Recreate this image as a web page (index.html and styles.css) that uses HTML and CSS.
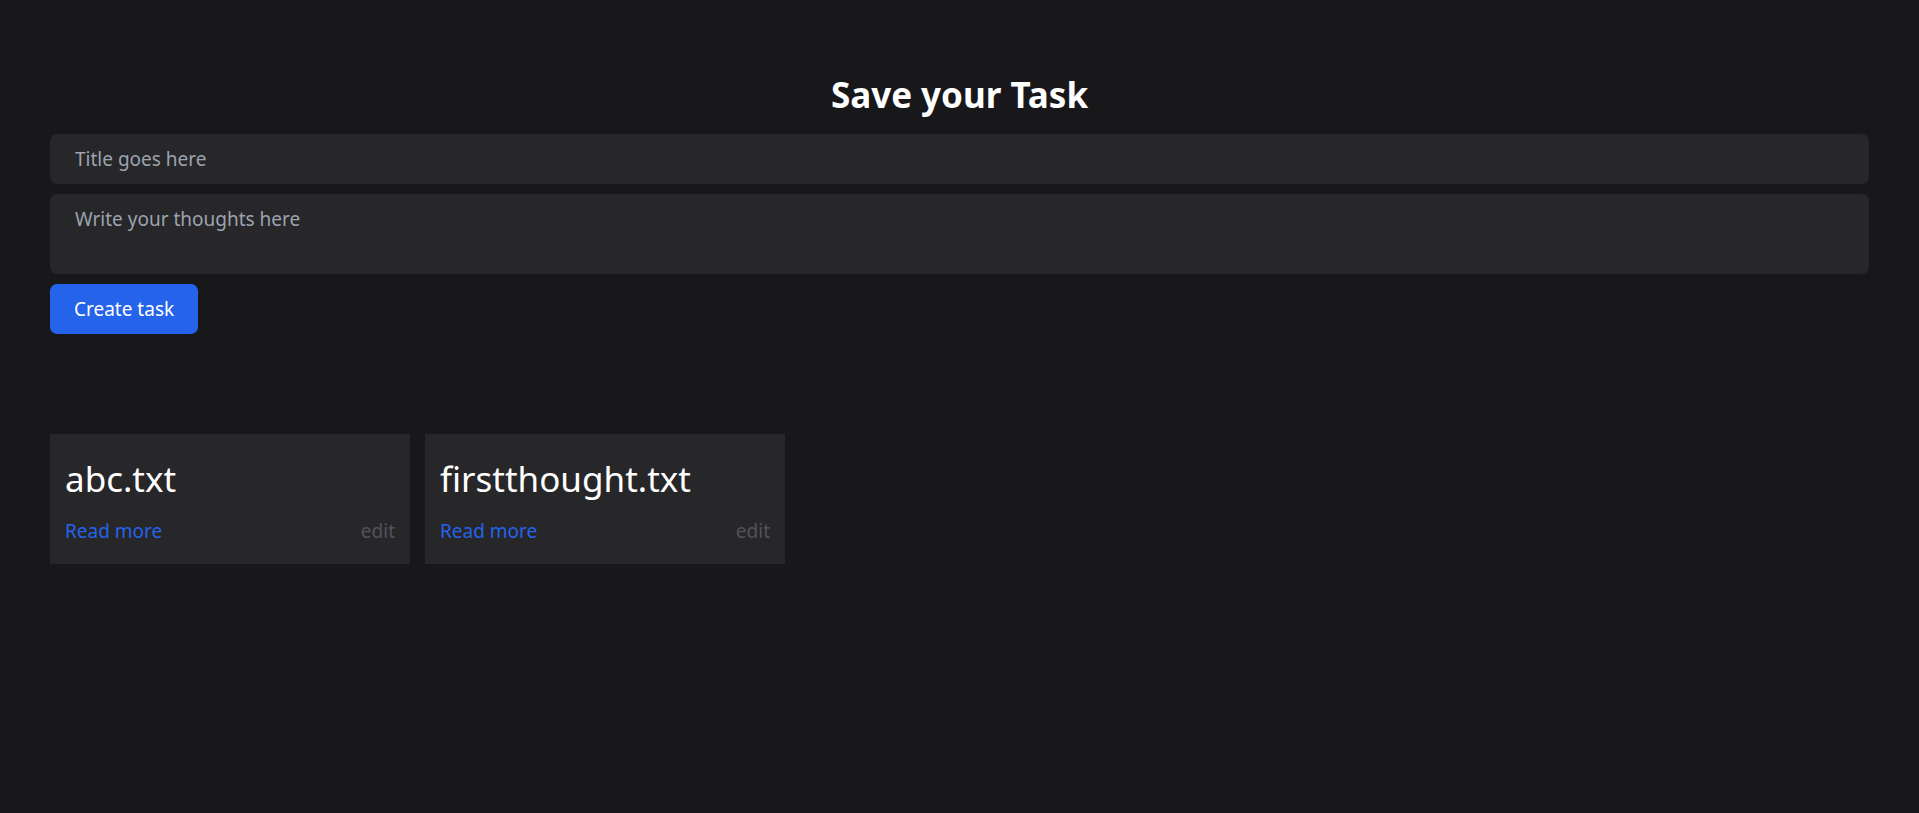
FILE: index.html
```html
<!DOCTYPE html>
<html lang="en">
<head>
<meta charset="utf-8">
<title>Save your Task</title>
<link rel="stylesheet" href="styles.css">
</head>
<body>
<main class="page">
  <h1 class="heading">Save your Task</h1>
  <form class="task-form">
    <input class="field title-field" type="text" placeholder="Title goes here">
    <textarea class="field body-field" placeholder="Write your thoughts here"></textarea>
    <button class="create-btn" type="button">Create task</button>
  </form>
  <section class="cards">
    <article class="card">
      <h2 class="card-title">abc.txt</h2>
      <div class="card-actions">
        <a class="read-more" href="#">Read more</a>
        <a class="edit" href="#">edit</a>
      </div>
    </article>
    <article class="card">
      <h2 class="card-title">firstthought.txt</h2>
      <div class="card-actions">
        <a class="read-more" href="#">Read more</a>
        <a class="edit" href="#">edit</a>
      </div>
    </article>
  </section>
</main>
</body>
</html>
```

FILE: styles.css
```css
* { box-sizing: border-box; }
html, body {
  margin: 0;
  padding: 0;
  background: #18181b;
  height: 100%;
}
body {
  font-family: "Segoe UI", "Noto Sans", "Open Sans", sans-serif;
  color: #ffffff;
}
.page {
  padding: 75px 50px 50px;
}
.heading {
  margin: 0 0 19px;
  text-align: center;
  font-size: 35px;
  line-height: 40px;
  font-weight: 700;
  color: #ffffff;
}
.task-form {
  display: flex;
  flex-direction: column;
  align-items: flex-start;
  gap: 10px;
}
.field {
  width: 100%;
  background: #27272a;
  border: none;
  outline: none;
  border-radius: 7px;
  color: #e5e7eb;
  font-family: inherit;
  font-size: 19px;
  line-height: 30px;
  padding: 10px 25px;
  margin: 0;
}
.field::placeholder { color: #9ca3af; }
.title-field { height: 50px; }
.body-field {
  height: 80px;
  resize: none;
  display: block;
}
.create-btn {
  background: #2563eb;
  color: #ffffff;
  border: none;
  border-radius: 7px;
  font-family: inherit;
  font-size: 19px;
  line-height: 30px;
  padding: 10px 24px;
  height: 50px;
  cursor: pointer;
}
.cards {
  display: flex;
  gap: 15px;
  margin-top: 100px;
}
.card {
  width: 360px;
  height: 130px;
  background: #27272a;
  padding: 22px 15px 15px;
  display: flex;
  flex-direction: column;
}
.card-title {
  margin: 0;
  font-size: 35px;
  line-height: 45px;
  font-weight: 400;
  color: #ffffff;
}
.card-actions {
  display: flex;
  justify-content: space-between;
  margin-top: 15px;
  font-size: 19px;
  line-height: 30px;
}
.read-more {
  color: #2563eb;
  text-decoration: none;
}
.edit {
  color: #52525b;
  text-decoration: none;
}
```
